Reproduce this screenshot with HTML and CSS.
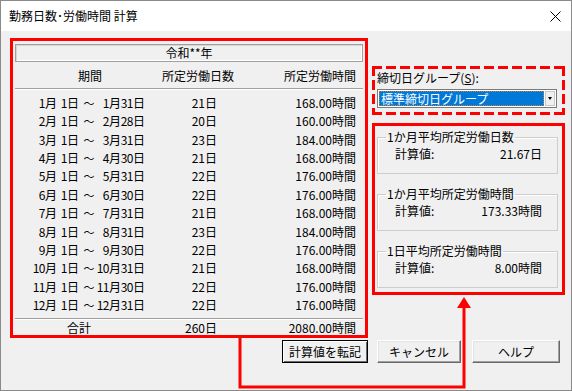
FILE: index.html
```html
<!DOCTYPE html>
<html lang="ja">
<head>
<meta charset="utf-8">
<title>勤務日数･労働時間 計算</title>
<link rel="stylesheet" href="styles.css">
</head>
<body>
<div class="window">
  <div class="titlebar">
    <span class="title">勤務日数･労働時間 計算</span>
    <svg class="close" width="11" height="11" viewBox="0 0 11 11"><path d="M0.5 0.5 L10.5 10.5 M10.5 0.5 L0.5 10.5" stroke="#000" stroke-width="1" fill="none"/></svg>
  </div>
  <div class="content">
    <div class="main">
      <div class="calendar">
        <div class="yearbox">令和**年</div>
        <div class="colhead">
          <span class="h1">期間</span>
          <span class="h2">所定労働日数</span>
          <span class="h3">所定労働時間</span>
        </div>
        <div class="sep"></div>
        <div class="rows">
          <div class="row"><span class="date"><span class="n m">1</span><span class="k">月</span><span class="n d">1</span><span class="k">日</span><span class="t">～</span><span class="n m2">1</span><span class="k">月</span><span class="n d2">31</span><span class="k">日</span></span><span class="days">21日</span><span class="hours">168.00時間</span></div>
          <div class="row"><span class="date"><span class="n m">2</span><span class="k">月</span><span class="n d">1</span><span class="k">日</span><span class="t">～</span><span class="n m2">2</span><span class="k">月</span><span class="n d2">28</span><span class="k">日</span></span><span class="days">20日</span><span class="hours">160.00時間</span></div>
          <div class="row"><span class="date"><span class="n m">3</span><span class="k">月</span><span class="n d">1</span><span class="k">日</span><span class="t">～</span><span class="n m2">3</span><span class="k">月</span><span class="n d2">31</span><span class="k">日</span></span><span class="days">23日</span><span class="hours">184.00時間</span></div>
          <div class="row"><span class="date"><span class="n m">4</span><span class="k">月</span><span class="n d">1</span><span class="k">日</span><span class="t">～</span><span class="n m2">4</span><span class="k">月</span><span class="n d2">30</span><span class="k">日</span></span><span class="days">21日</span><span class="hours">168.00時間</span></div>
          <div class="row"><span class="date"><span class="n m">5</span><span class="k">月</span><span class="n d">1</span><span class="k">日</span><span class="t">～</span><span class="n m2">5</span><span class="k">月</span><span class="n d2">31</span><span class="k">日</span></span><span class="days">22日</span><span class="hours">176.00時間</span></div>
          <div class="row"><span class="date"><span class="n m">6</span><span class="k">月</span><span class="n d">1</span><span class="k">日</span><span class="t">～</span><span class="n m2">6</span><span class="k">月</span><span class="n d2">30</span><span class="k">日</span></span><span class="days">22日</span><span class="hours">176.00時間</span></div>
          <div class="row"><span class="date"><span class="n m">7</span><span class="k">月</span><span class="n d">1</span><span class="k">日</span><span class="t">～</span><span class="n m2">7</span><span class="k">月</span><span class="n d2">31</span><span class="k">日</span></span><span class="days">21日</span><span class="hours">168.00時間</span></div>
          <div class="row"><span class="date"><span class="n m">8</span><span class="k">月</span><span class="n d">1</span><span class="k">日</span><span class="t">～</span><span class="n m2">8</span><span class="k">月</span><span class="n d2">31</span><span class="k">日</span></span><span class="days">23日</span><span class="hours">184.00時間</span></div>
          <div class="row"><span class="date"><span class="n m">9</span><span class="k">月</span><span class="n d">1</span><span class="k">日</span><span class="t">～</span><span class="n m2">9</span><span class="k">月</span><span class="n d2">30</span><span class="k">日</span></span><span class="days">22日</span><span class="hours">176.00時間</span></div>
          <div class="row"><span class="date"><span class="n m">10</span><span class="k">月</span><span class="n d">1</span><span class="k">日</span><span class="t">～</span><span class="n m2">10</span><span class="k">月</span><span class="n d2">31</span><span class="k">日</span></span><span class="days">21日</span><span class="hours">168.00時間</span></div>
          <div class="row"><span class="date"><span class="n m">11</span><span class="k">月</span><span class="n d">1</span><span class="k">日</span><span class="t">～</span><span class="n m2">11</span><span class="k">月</span><span class="n d2">30</span><span class="k">日</span></span><span class="days">22日</span><span class="hours">176.00時間</span></div>
          <div class="row"><span class="date"><span class="n m">12</span><span class="k">月</span><span class="n d">1</span><span class="k">日</span><span class="t">～</span><span class="n m2">12</span><span class="k">月</span><span class="n d2">31</span><span class="k">日</span></span><span class="days">22日</span><span class="hours">176.00時間</span></div>
        </div>
        <div class="sep sep2"></div>
        <div class="row total"><span class="tlabel">合計</span><span class="days">260日</span><span class="hours">2080.00時間</span></div>
      </div>
      <div class="side">
        <div class="groupsel">
          <div class="label">締切日グループ(<span class="u">S</span>):</div>
          <div class="select">
            <div class="sel-val">標準締切日グループ</div>
            <div class="sel-btn"><span class="tri"></span></div>
          </div>
        </div>
        <div class="results">
          <fieldset class="grp">
            <legend>1か月平均所定労働日数</legend>
            <div class="calc"><span>計算値:</span><span>21.67日</span></div>
          </fieldset>
          <fieldset class="grp">
            <legend>1か月平均所定労働時間</legend>
            <div class="calc"><span>計算値:</span><span>173.33時間</span></div>
          </fieldset>
          <fieldset class="grp">
            <legend>1日平均所定労働時間</legend>
            <div class="calc"><span>計算値:</span><span>8.00時間</span></div>
          </fieldset>
        </div>
      </div>
    </div>
    <div class="buttons">
      <button class="btn btn1 default">計算値を転記</button>
      <button class="btn btn2">キャンセル</button>
      <button class="btn btn3">ヘルプ</button>
    </div>
  </div>
  <svg class="arrow" width="572" height="391" viewBox="0 0 572 391">
    <path d="M240 338 V387 H464 V306" stroke="#f00" stroke-width="3" fill="none"/>
    <polygon points="464,297 457,308 471,308" fill="#f00"/>
  </svg>
</div>
</body>
</html>
```

FILE: styles.css
```css
* { box-sizing: border-box; margin: 0; padding: 0; }
html, body { margin: 0; background: #fff; }
body {
  font-family: "Noto Sans CJK JP", "Noto Sans", sans-serif;
  font-size: 12px;
  color: #000;
}
.window {
  position: relative;
  width: 572px;
  height: 391px;
  border: 1px solid #8a8a8a;
  background: #f0f0f0;
  display: flex;
  flex-direction: column;
  overflow: hidden;
}
.titlebar {
  flex: none;
  height: 30px;
  background: #fff;
  display: flex;
  align-items: center;
  justify-content: space-between;
  padding: 0 10px 0 8px;
}
.title { font-size: 12px; line-height: 14px; }
.close { display: block; }

.content {
  flex: 1;
  display: flex;
  flex-direction: column;
  padding: 7px 6px 0 9px;
}
.main { display: flex; gap: 4px; align-items: flex-start; }

/* left panel */
.calendar {
  width: 358px;
  border: 3px solid #f00;
  padding-top: 3px;
  display: flex;
  flex-direction: column;
}
.yearbox {
  height: 18px;
  margin: 0 2px;
  border: 1px solid #a0a0a0;
  box-shadow: inset 1px 1px 0 #d6d6d6, inset -1px -1px 0 #fff;
  text-align: center;
  line-height: 16px;
}
.colhead {
  display: grid;
  grid-template-columns: 149px 72px 1fr;
  height: 18px;
  line-height: 18px;
  margin-top: 5px;
}
.colhead .h1 { padding-left: 65px; }
.colhead .h3 { text-align: right; padding-right: 9px; }
.sep {
  height: 2px;
  margin: 3px 2px 0;
  border-top: 1px solid #a0a0a0;
  border-bottom: 1px solid #fff;
}
.sep2 { margin-top: 4px; }
.rows { margin-top: 4px; }
.row {
  display: grid;
  grid-template-columns: 132px 72px 1fr;
  height: 18.36px;
  line-height: 18px;
  white-space: nowrap;
}
.date { display: flex; padding-left: 18px; }
.date > span { flex: none; }
.n { display: flex; justify-content: flex-end; letter-spacing: -0.5px; }
.m { width: 14px; }
.d { width: 10px; }
.m2 { width: 12px; }
.d2 { width: 12px; }
.k { width: 12px; }
.t { width: 16px; margin-left: 2px; text-align: center; font-size: 11px; }
.days { text-align: right; }
.hours { text-align: right; padding-right: 9px; }
.total { height: 15px; line-height: 15px; }
.tlabel { padding-left: 54px; }

/* right side */
.side { width: 193px; padding-top: 28px; }
.groupsel {
  height: 49px;
  padding: 5px 8px 0 5px;
  background:
    repeating-linear-gradient(90deg, #f00 0 10px, transparent 10px 14px) top left / 100% 3px no-repeat,
    repeating-linear-gradient(90deg, #f00 0 10px, transparent 10px 14px) bottom left / 100% 3px no-repeat,
    repeating-linear-gradient(180deg, #f00 0 10px, transparent 10px 14px) top left / 3px 100% no-repeat,
    repeating-linear-gradient(180deg, #f00 0 10px, transparent 10px 14px) top right / 3px 100% no-repeat;
}
.label { line-height: 14px; }
.u { text-decoration: underline; }
.select {
  margin-top: 4px;
  height: 19px;
  border: 1px solid #7a7a7a;
  background: #fff;
  padding: 1px;
  display: flex;
  gap: 1px;
}
.sel-val {
  flex: 1;
  background: #0078d7;
  color: #fff;
  line-height: 15px;
  padding-left: 2px;
  outline: 1px dotted #c87f3a;
  outline-offset: -1px;
  white-space: nowrap;
}
.sel-btn {
  width: 10px;
  background: #f0f0f0;
  border: 1px solid #c8c8c8;
  display: flex;
  align-items: center;
  justify-content: center;
}
.tri {
  width: 0;
  height: 0;
  border-left: 2.5px solid transparent;
  border-right: 2.5px solid transparent;
  border-top: 3px solid #000;
}
.results {
  margin-top: 8px;
  height: 172px;
  border: 3px solid #f00;
  padding: 4px 4px 0 2px;
  display: flex;
  flex-direction: column;
  gap: 13px;
}
.grp {
  border: 1px solid #cdcdcd;
  box-shadow: inset 1px 1px 0 #fff;
  padding: 3px 15px 12px 17px;
  min-width: 0;
}
.grp legend {
  padding: 0 1px;
  margin-left: -9px;
  line-height: 14px;
}
.calc {
  display: flex;
  justify-content: space-between;
  line-height: 14px;
}

/* buttons */
.buttons {
  display: flex;
  justify-content: flex-end;
  margin-top: 2px;
  padding-right: 5px;
}
.btn {
  font-family: inherit;
  font-size: 12px;
  color: #000;
  height: 23px;
  line-height: 19px;
  background: #f0f0f0;
  border: 1px solid;
  border-color: #fff #696969 #696969 #fff;
  box-shadow: inset -1px -1px 0 #a0a0a0, inset 1px 1px 0 #e3e3e3;
}
.btn.default {
  border-color: #000;
  box-shadow: inset 1px 1px 0 #fff, inset -1px -1px 0 #696969;
}
.btn1 { width: 86px; }
.btn2 { width: 84px; margin-left: 9px; }
.btn3 { width: 88px; margin-left: 11px; }

.arrow {
  position: absolute;
  left: -1px;
  top: -1px;
  pointer-events: none;
}
```
